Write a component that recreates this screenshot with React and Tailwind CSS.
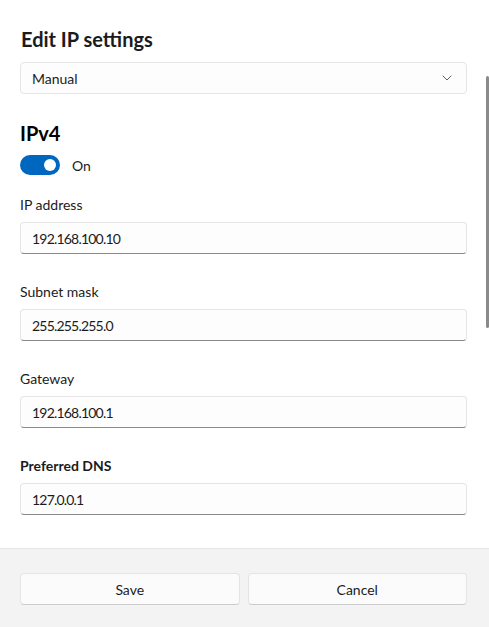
import React from "react";

function Field({ label, value, bold }) {
  return (
    <div className="flex flex-col">
      <div className={`h-5 leading-5 text-[14px] text-[#1b1b1b] ${bold ? "font-bold" : ""}`}>{label}</div>
      <div className="mt-[7px] h-[32px] rounded-[4px] border border-[#e5e5e5] border-b-[#8a8a8a] bg-[#fdfdfd] flex items-center pl-[11px] text-[14px] tracking-[-0.8px] text-[#1b1b1b]">
        {value}
      </div>
    </div>
  );
}

export default function App() {
  return (
    <div className="w-[489px] h-[627px] bg-white relative overflow-hidden flex flex-col" style={{ fontFamily: 'Lato, "Noto Sans", sans-serif' }}>
      <div className="absolute right-0 top-[76px] w-[3px] h-[252px] bg-[#8a8a8a] rounded-full" />
      <div className="flex-1 pl-[20px] pr-[22px] pt-[25px]">
        <h1 className="text-[20px] leading-[28px] font-bold text-[#1b1b1b] pl-[1px]">Edit IP settings</h1>
        <div className="mt-[9px] h-[32px] rounded-[4px] border border-[#e5e5e5] bg-[#fdfdfd] flex items-center justify-between pl-[11px] pr-[14px] text-[14px] text-[#1b1b1b]">
          <span>Manual</span>
          <svg width="10" height="6" viewBox="0 0 10 6" fill="none">
            <path d="M1 1l4 4 4-4" stroke="#5f5f5f" strokeWidth="1" strokeLinecap="round" strokeLinejoin="round" />
          </svg>
        </div>
        <h2 className="mt-[25px] text-[20px] leading-[28px] font-bold text-[#000]">IPv4</h2>
        <div className="mt-[8px] flex items-center h-[20px]">
          <div className="w-[40px] h-[20px] rounded-full bg-[#0067c0] flex items-center justify-end pr-[4px]">
            <div className="w-[12px] h-[12px] rounded-full bg-white" />
          </div>
          <span className="ml-[12px] text-[14px] text-[#1b1b1b]">On</span>
        </div>
        <div className="mt-[20px] flex flex-col gap-[28px]">
          <Field label="IP address" value="192.168.100.10" />
          <Field label="Subnet mask" value="255.255.255.0" />
          <Field label="Gateway" value="192.168.100.1" />
          <Field label="Preferred DNS" value="127.0.0.1" bold />
        </div>
      </div>
      <div className="h-[79px] bg-[#f3f3f3] border-t border-[#e5e5e5] pl-[20px] pr-[22px] pt-[24px] flex gap-[8px]">
        <button className="flex-1 h-[32px] rounded-[4px] border border-[#e5e5e5] border-b-[#cccccc] bg-[#fbfbfb] text-[14px] text-[#1b1b1b]">Save</button>
        <button className="flex-1 h-[32px] rounded-[4px] border border-[#e5e5e5] border-b-[#cccccc] bg-[#fbfbfb] text-[14px] text-[#1b1b1b]">Cancel</button>
      </div>
    </div>
  );
}
